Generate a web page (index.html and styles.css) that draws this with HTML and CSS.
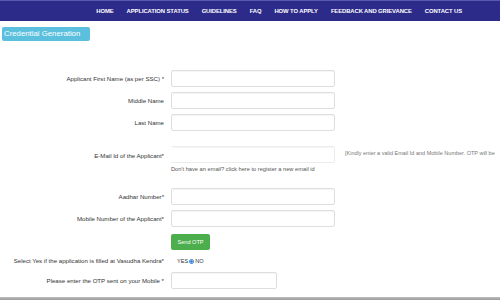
FILE: index.html
```html
<!DOCTYPE html>
<html>
<head>
<meta charset="utf-8">
<link rel="stylesheet" href="styles.css">
</head>
<body>
<div class="page">
  <nav class="nav">
    <a>HOME</a>
    <a>APPLICATION STATUS</a>
    <a>GUIDELINES</a>
    <a>FAQ</a>
    <a>HOW TO APPLY</a>
    <a>FEEDBACK AND GRIEVANCE</a>
    <a>CONTACT US</a>
  </nav>
  <div class="tabbar"><span class="tab">Credential Generation</span></div>
  <div class="form">
    <div class="row r1">
      <label class="lbl">Applicant First Name (as per SSC) *</label>
      <div class="field"><div class="input"></div></div>
    </div>
    <div class="row">
      <label class="lbl">Middle Name</label>
      <div class="field"><div class="input"></div></div>
    </div>
    <div class="row">
      <label class="lbl">Last Name</label>
      <div class="field"><div class="input"></div></div>
    </div>
    <div class="row email">
      <label class="lbl lbl-email">E-Mail Id of the Applicant*</label>
      <div class="field">
        <div class="input faint"></div>
        <div class="help">Don't have an email? click here to register a new email id</div>
      </div>
      <div class="note">[Kindly enter a valid Email Id and Mobile Number. OTP will be</div>
    </div>
    <div class="row aadhar">
      <label class="lbl">Aadhar Number*</label>
      <div class="field"><div class="input"></div></div>
    </div>
    <div class="row">
      <label class="lbl">Mobile Number of the Applicant*</label>
      <div class="field"><div class="input"></div></div>
    </div>
    <div class="row btnrow">
      <span class="lbl"></span>
      <div class="field"><span class="send">Send OTP</span></div>
    </div>
    <div class="row radiorow">
      <label class="lbl">Select Yes if the application is filled at Vasudha Kendra*</label>
      <div class="field radios">
        <span class="rtext">YES</span><span class="radio on"></span><span class="rtext">NO</span>
      </div>
    </div>
    <div class="row otp">
      <label class="lbl">Please enter the OTP sent on your Mobile *</label>
      <div class="field"><div class="input short"></div></div>
    </div>
  </div>
  <div class="bottomline"></div>
</div>
</body>
</html>
```
FILE: styles.css
```css
html, body {
  margin: 0;
  padding: 0;
  background: #ffffff;
}
.page {
  width: 500px;
  height: 300px;
  overflow: hidden;
  display: flex;
  flex-direction: column;
  font-family: "Liberation Sans", Arial, sans-serif;
  color: #333333;
}
.nav {
  height: 21px;
  background: #2d2b8a;
  border-top: 1px solid #5a58b0;
  box-sizing: border-box;
  display: flex;
  justify-content: flex-end;
  align-items: center;
  gap: 13px;
  padding-right: 38px;
}
.nav a {
  color: #ffffff;
  font-family: "Liberation Sans Narrow", "Liberation Sans", sans-serif;
  font-size: 5.9px;
  font-weight: bold;
  letter-spacing: -0.1px;
  white-space: nowrap;
}
.tabbar {
  margin-top: 6px;
  padding-left: 2px;
  display: flex;
}
.tab {
  background: #5bc0de;
  color: #ffffff;
  font-size: 7.8px;
  height: 14px;
  line-height: 14px;
  padding: 0 2px;
  border-radius: 2px;
  width: 84px;
  white-space: nowrap;
}
.form {
  display: flex;
  flex-direction: column;
}
.row {
  display: flex;
  align-items: flex-start;
  gap: 7px;
  margin-top: 5px;
}
.r1 { margin-top: 29px; }
.lbl {
  width: 164px;
  flex: none;
  text-align: right;
  font-size: 6.1px;
  line-height: 17px;
  color: #333333;
  white-space: nowrap;
}
.field {
  width: 164px;
  flex: none;
}
.input {
  height: 17px;
  box-sizing: border-box;
  border: 1px solid #dedede;
  border-radius: 2px;
  box-shadow: inset 0 1px 1px rgba(0,0,0,0.04);
  background: #ffffff;
}
.input.faint {
  border-color: #ececec;
  border-left-color: #ffffff;
}
.input.short { width: 106px; }
.email { margin-top: 15px; }
.lbl-email { line-height: 17px; padding-top: 1px; }
.help {
  font-size: 5.7px;
  color: #555555;
  margin-top: 3px;
  white-space: nowrap;
}
.note {
  font-size: 5.5px;
  color: #777777;
  white-space: nowrap;
  padding-top: 4px;
  margin-left: 3px;
}
.aadhar { margin-top: 16px; }
.btnrow { margin-top: 3px; }
.send {
  display: inline-block;
  background: #4cae4c;
  color: #ffffff;
  font-size: 5.6px;
  height: 16px;
  line-height: 16px;
  width: 39px;
  text-align: center;
  border-radius: 2px;
}
.radiorow { margin-top: 3px; }
.radiorow .lbl { line-height: 16px; }
.radios {
  display: flex;
  align-items: center;
  height: 16px;
  padding-left: 6px;
  box-sizing: border-box;
  gap: 1px;
}
.rtext {
  font-size: 5.6px;
  color: #333333;
}
.radio {
  width: 5px;
  height: 5px;
  border-radius: 50%;
  border: 1px solid #2a7bd8;
  box-sizing: border-box;
  background: #ffffff;
}
.radio.on {
  background: radial-gradient(circle, #2a7bd8 45%, #ffffff 55%);
}
.otp { margin-top: 3px; }
.bottomline {
  margin-top: auto;
  height: 3px;
  background: linear-gradient(#bdbdbd, #9a9a9a);
}
```
